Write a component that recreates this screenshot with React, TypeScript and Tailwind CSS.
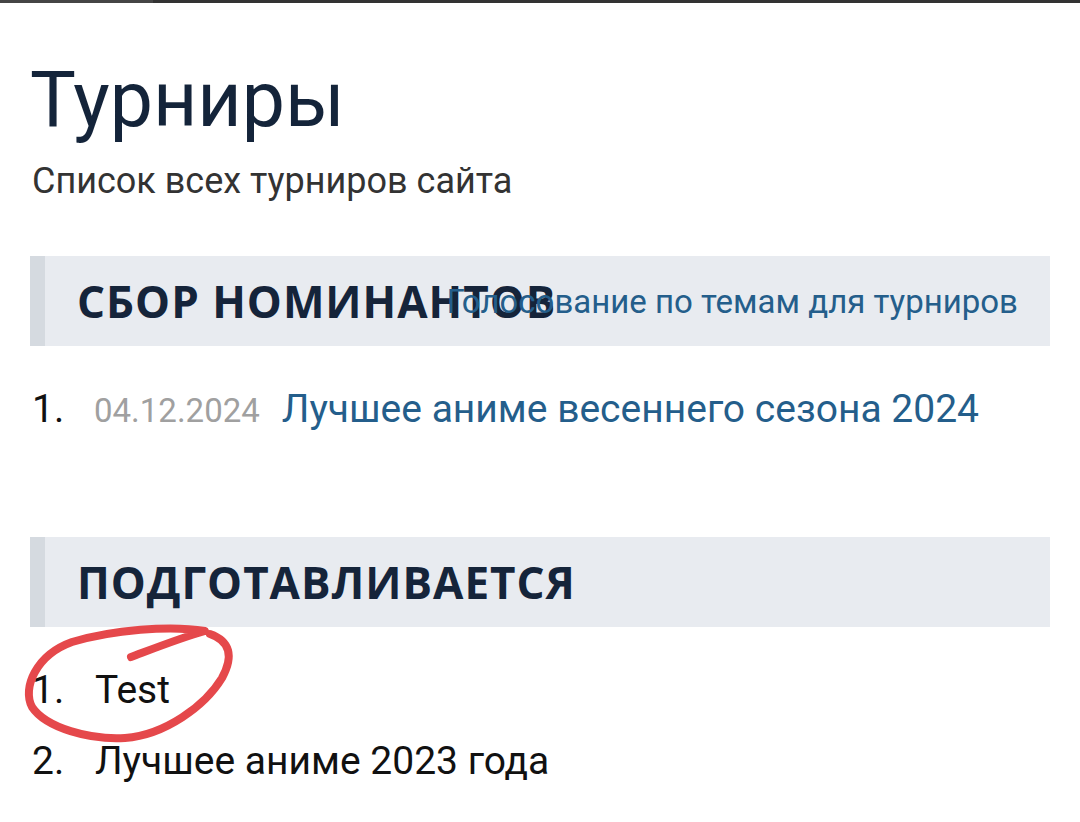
import React from 'react';

const sans = "font-['Roboto','Liberation_Sans',sans-serif]";
const heading = "font-['Open_Sans','Liberation_Sans',sans-serif]";

function SectionHeader({ title, note }: { title: string; note?: string }) {
  return (
    <div className="relative flex h-[90px] items-center border-l-[15px] border-[#d5dae0] bg-[#e8ebf0] pl-[32px]">
      <h2 className={`${heading} text-[44px] leading-none font-bold uppercase tracking-[1px] text-[#15243a] whitespace-nowrap`}>
        {title}
      </h2>
      {note && (
        <span className={`${sans} absolute right-[32px] top-1/2 -translate-y-1/2 text-[33px] leading-none text-[#245e8b] whitespace-nowrap`}>
          {note}
        </span>
      )}
    </div>
  );
}

// red hand-drawn circle around the first item of the second list
function Scribble() {
  return (
    <svg className="pointer-events-none absolute left-0 top-[620px]" width="260" height="140" viewBox="0 620 260 140">
      <path
        d="M131 657 C155 648 183 637 205 631 C170 625 112 630 72 642 C36 655 22 688 32 707 C46 728 90 740 125 738 C165 735 205 706 222 678 C234 656 230 641 210 634"
        fill="none"
        stroke="#e5484b"
        strokeWidth="8"
        strokeLinecap="round"
        strokeLinejoin="round"
      />
    </svg>
  );
}

export default function App() {
  return (
    <div className="relative min-h-[822px] w-[1080px] overflow-hidden bg-white">
      <div className="flex h-[3px]">
        <div className="w-[153px] bg-[#454545]" />
        <div className="flex-1 bg-[#333333]" />
      </div>

      <div className="px-[30px]">
        <h1 className={`${sans} mt-[59px] text-[77px] leading-none text-[#14243a]`}>Турниры</h1>
        <p className={`${sans} mt-[24px] pl-[2px] text-[36px] leading-none text-[#333333]`}>
          Список всех турниров сайта
        </p>

        <div className="mt-[57px]">
          <SectionHeader title="Сбор номинантов" note="Голосование по темам для турниров" />
        </div>

        <ol className={`${sans} mt-[44px] text-[39px] leading-none`}>
          <li className="flex items-baseline">
            <span className="w-[64px] pl-[2px] text-[#111111]">1.</span>
            <span className="mr-[22px] text-[33px] text-[#a0a0a0]">04.12.2024</span>
            <a className="text-[#245e8b]">Лучшее аниме весеннего сезона 2024</a>
          </li>
        </ol>

        <div className="mt-[108px]">
          <SectionHeader title="Подготавливается" />
        </div>

        <ol className={`${sans} mt-[44px] flex flex-col gap-[32px] text-[39px] leading-none text-[#111111]`}>
          <li className="flex items-baseline">
            <span className="w-[65px] pl-[2px]">1.</span>
            <span>Test</span>
          </li>
          <li className="flex items-baseline">
            <span className="w-[65px] pl-[2px]">2.</span>
            <span>Лучшее аниме 2023 года</span>
          </li>
        </ol>
      </div>

      <Scribble />
    </div>
  );
}
